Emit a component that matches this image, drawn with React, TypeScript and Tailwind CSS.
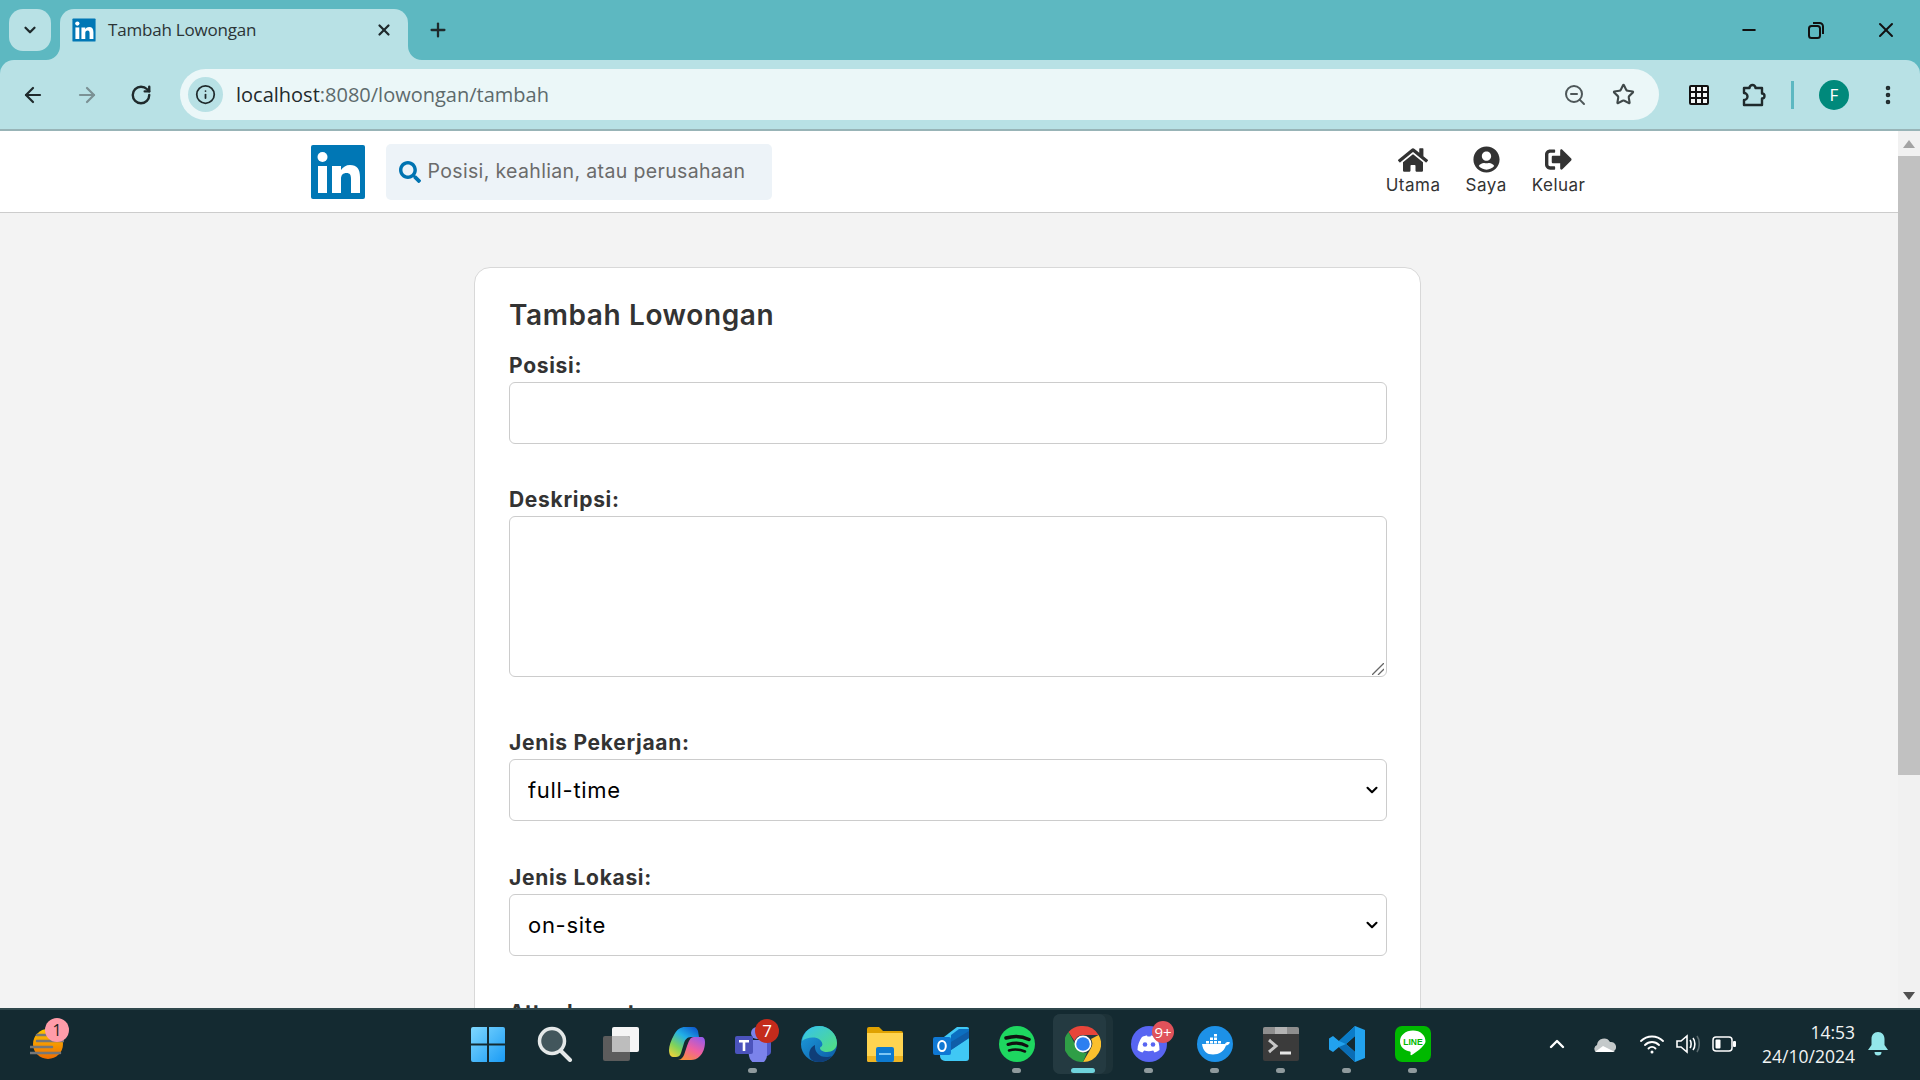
import { ArrowLeft, ArrowRight, ChevronDown, ChevronUp, EllipsisVertical, Info, Minus, Plus, RotateCw, Star, X, ZoomOut } from 'lucide-react';
import { FaHome, FaSearch, FaSignOutAlt, FaUserCircle } from 'react-icons/fa';

function LinkedinLogo({ size }: { size: number }) {
  return (
    <svg width={size} height={size} viewBox="0 0 56 56" className="shrink-0">
      <rect x="1" y="1" width="54" height="54" rx="2" fill="#0077b5" />
      <rect x="8" y="22" width="9" height="27" fill="#fff" />
      <circle cx="12.500" cy="13" r="5" fill="#fff" />
      <path d="M22 22h9v4c2-3 5-5 9-5 7 0 10 4 10 12v16h-9V35c0-4-1-6-4.500-6S31 31 31 35v14h-9Z" fill="#fff" />
    </svg>
  );
}

function Flare({ side }: { side: 'left' | 'right' }) {
  return (
    <svg width="14" height="14" viewBox="0 0 14 14" className={`absolute bottom-0 ${side === 'left' ? '-left-[14px]' : '-right-[14px]'}`}>
      {side === 'left' ? <path d="M14 0V14H0A14 14 0 0 0 14 0Z" fill="#b8e1e5" /> : <path d="M0 0V14H14A14 14 0 0 1 0 0Z" fill="#b8e1e5" />}
    </svg>
  );
}

function ChromeBar() {
  return (
    <div className="shrink-0 bg-[#5db8c1] text-[#1f2a2c]">
      {/* tab strip */}
      <div className="h-[60px] flex items-end pl-[9px]">
        <div className="self-start mt-[9px] w-[42px] h-[42px] rounded-[14px] bg-[#b8e1e5] flex items-center justify-center">
          <ChevronDown size={18} strokeWidth={3} />
        </div>
        <div className="relative ml-[9px] w-[348px] h-[51px] rounded-t-[14px] bg-[#b8e1e5] flex items-center pl-[12px] pb-[9px]">
          <Flare side="left" />
          <Flare side="right" />
          <LinkedinLogo size={24} />
          <span className="ml-[12px] text-[17px] font-['Open_Sans',sans-serif] tracking-[-0.2px] text-[#2b3436]">Tambah Lowongan</span>
          <X size={18} strokeWidth={3} className="ml-auto mr-[15px]" />
        </div>
        <Plus size={22} strokeWidth={2.5} className="self-start mt-[19px] ml-[19px]" />
        <div className="ml-auto self-start flex items-center h-[60px] text-[#111]">
          <Minus size={20} strokeWidth={2.4} className="mr-[48px]" />
          <svg width="18" height="18" viewBox="0 0 18 18" fill="none" stroke="#111" strokeWidth="2" className="mr-[49px]">
            <rect x="2" y="5" width="11" height="12" rx="2.5" />
            <path d="M6 2h6.500A3.500 3.500 0 0 1 16 5.500V13" />
          </svg>
          <X size={24} strokeWidth={2} className="mr-[22px]" />
        </div>
      </div>
      {/* toolbar */}
      <div className="h-[71px] bg-[#b8e1e5] rounded-t-[14px] border-b-2 border-[#98b4b7] flex items-center">
        <ArrowLeft size={24} strokeWidth={2.2} className="ml-[21px]" />
        <ArrowRight size={24} strokeWidth={2.2} className="ml-[30px] text-[#7b9194]" />
        <RotateCw size={22} strokeWidth={2.6} className="ml-[31px]" />
        <div className="ml-[28px] w-[1479px] h-[51px] rounded-full bg-[#ebf7f8] flex items-center pl-[8px] pr-[24px]">
          <div className="w-[35px] h-[35px] rounded-full bg-[#b8e1e5] flex items-center justify-center">
            <Info size={21} strokeWidth={2} />
          </div>
          <span className="ml-[13px] text-[20px] font-['Open_Sans',sans-serif] text-[#1f2a2c]">
            localhost<span className="text-[#5d6a6c]">:8080/lowongan/tambah</span>
          </span>
          <ZoomOut size={24} strokeWidth={2} className="ml-auto text-[#4e5759]" />
          <Star size={23} strokeWidth={2.2} className="ml-[25px] text-[#3f4849]" />
        </div>
        <svg width="22" height="22" viewBox="0 0 22 22" className="ml-[29px]" fill="none" stroke="#111" strokeWidth="2">
          <rect x="2" y="2" width="18" height="18" rx="1" fill="#f3f6f6" />
          <path d="M8 2v18M14 2v18M2 8h18M2 14h18" />
        </svg>
        <svg width="26" height="26" viewBox="0 0 26 26" className="ml-[31px]" fill="none" stroke="#1f2a2c" strokeWidth="2.4" strokeLinejoin="round">
          <path d="M3 6h5.500a3 3 0 0 1 6 0H21v5.500a2.500 2.500 0 0 1 0 5V23H3v-5a3.500 3.500 0 0 0 0-7Z" />
        </svg>
        <div className="ml-[24px] w-[3px] h-[28px] bg-[#5db8c1]" />
        <div className="ml-[25px] w-[30px] h-[30px] rounded-full bg-[#00897b] text-white text-[17px] font-['Open_Sans',sans-serif] flex items-center justify-center">F</div>
        <EllipsisVertical size={24} strokeWidth={2.6} className="ml-[27px]" />
      </div>
    </div>
  );
}

function NavItem({ icon, label }: { icon: React.ReactNode; label: string }) {
  return (
    <div className="flex flex-col items-center text-[#333]">
      <div className="h-[28px] flex items-center text-[27px]">{icon}</div>
      <span className="text-[17px] leading-[22px] tracking-[0.5px]">{label}</span>
    </div>
  );
}

function Header() {
  return (
    <div className="h-[82px] shrink-0 bg-white border-b border-[#ccc] pr-[3px]">
      <div className="w-[1276px] mx-auto h-full flex items-center">
        <LinkedinLogo size={56} />
        <div className="ml-[20px] w-[386px] h-[56px] rounded-[5px] bg-[#edf3f8] flex items-center pl-[13px]">
          <FaSearch className="text-[#0073b1] text-[22px] shrink-0" />
          <input
            readOnly
            placeholder="Posisi, keahlian, atau perusahaan"
            className="ml-[7px] w-[345px] bg-transparent outline-none text-[19.5px] tracking-[0.35px] placeholder:text-[#6b6b6b]"
          />
        </div>
        <div className="ml-auto flex items-start gap-[25px] -mt-[2px]">
          <NavItem icon={<FaHome className="text-[30px]" />} label="Utama" />
          <NavItem icon={<FaUserCircle />} label="Saya" />
          <NavItem icon={<FaSignOutAlt />} label="Keluar" />
        </div>
      </div>
    </div>
  );
}

function Field({ label, children, mb }: { label: string; children: React.ReactNode; mb: string }) {
  return (
    <div className={mb}>
      <label className="block text-[21px] leading-[29px] font-bold tracking-[0.7px] text-[#333] mb-[2px]">{label}</label>
      {children}
    </div>
  );
}

const inputCls = 'block w-full border-[1.5px] border-[#ccc] rounded-[6px] bg-white outline-none text-[22px] text-black tracking-[0.7px]';

function SelectField({ value }: { value: string }) {
  return (
    <div className="relative">
      <select className={`${inputCls} h-[62px] px-[18px] appearance-none`} defaultValue={value}>
        <option>{value}</option>
      </select>
      <ChevronDown size={18} strokeWidth={2.8} className="absolute right-[6px] top-[22px] text-black pointer-events-none" />
    </div>
  );
}

function FormCard() {
  return (
    <div className="w-[947px] mx-auto mt-[54px] bg-white border-[1.5px] border-[#d8d8d8] rounded-[16px] pl-[34px] pr-[33px] pt-[27px] h-[900px]">
      <h1 className="text-[28px] leading-[40px] font-semibold tracking-[0.6px] text-[#333] mb-[16px]">Tambah Lowongan</h1>
      <Field label="Posisi:" mb="mb-[41px]">
        <input readOnly className={`${inputCls} h-[62px] px-[18px]`} />
      </Field>
      <Field label="Deskripsi:" mb="mb-[51px]">
        <div className="relative">
          <textarea readOnly className={`${inputCls} h-[161px] px-[18px] py-[12px] resize-none`} />
          <svg width="12" height="12" viewBox="0 0 12 12" className="absolute right-[3px] bottom-[2px] pointer-events-none" stroke="#666" strokeWidth="1.300">
            <path d="M0 12 12 0M6 12l6-6" />
          </svg>
        </div>
      </Field>
      <Field label="Jenis Pekerjaan:" mb="mb-[42px]">
        <SelectField value="full-time" />
      </Field>
      <Field label="Jenis Lokasi:" mb="mb-[42px]">
        <SelectField value="on-site" />
      </Field>
      <Field label="Attachment:" mb="mb-0">
        <div />
      </Field>
    </div>
  );
}

function Scrollbar() {
  return (
    <div className="w-[22px] shrink-0 bg-[#f1f1f1] flex flex-col items-center">
      <div className="h-[25px] flex items-center justify-center">
        <svg width="12" height="8" viewBox="0 0 12 8"><path d="M6 0 12 8H0Z" fill="#a3a3a3" /></svg>
      </div>
      <div className="w-full h-[619px] bg-[#c1c1c1]" />
      <div className="mt-auto h-[25px] flex items-center justify-center">
        <svg width="12" height="8" viewBox="0 0 12 8"><path d="M6 8 12 0H0Z" fill="#505050" /></svg>
      </div>
    </div>
  );
}

/* taskbar icons, 36px */
const WindowsIcon = (
  <svg width="36" height="36" viewBox="0 0 36 36">
    <defs>
      <linearGradient id="win" x1="0" y1="0" x2="1" y2="1">
        <stop offset="0" stopColor="#7fd8ff" />
        <stop offset="1" stopColor="#1a9bf5" />
      </linearGradient>
    </defs>
    <path d="M0 3a2 2 0 0 1 2-2h14v16.500H0ZM18 1h14a2 2 0 0 1 2 2v14.500H18ZM0 19.500h16V36H2a2 2 0 0 1-2-2ZM18 19.500h16V34a2 2 0 0 1-2 2H18Z" fill="url(#win)" />
  </svg>
);

const SearchIcon = (
  <svg width="36" height="36" viewBox="0 0 36 36" fill="none">
    <circle cx="15" cy="15" r="12.500" fill="#42565c" stroke="#e4e8e8" strokeWidth="3.500" />
    <path d="M24 25l9 9" stroke="#e4e8e8" strokeWidth="4" strokeLinecap="round" />
  </svg>
);

const TaskViewIcon = (
  <svg width="36" height="36" viewBox="0 0 36 36">
    <rect x="9" y="1" width="27" height="25" rx="2" fill="#f5f5f5" />
    <rect x="0" y="10" width="27" height="25" rx="2" fill="#5c5c5c" />
    <path d="M9 10h16a2 2 0 0 1 2 2v14H9Z" fill="#bdbdbd" />
  </svg>
);

const CopilotIcon = (
  <svg width="36" height="36" viewBox="0 0 36 36">
    <defs>
      <linearGradient id="cp1" x1="0.800" y1="0" x2="0.100" y2="1">
        <stop offset="0" stopColor="#0f5fd0" />
        <stop offset="0.350" stopColor="#22b0e8" />
        <stop offset="0.700" stopColor="#7fd35a" />
        <stop offset="1" stopColor="#f3d23a" />
      </linearGradient>
      <linearGradient id="cp2" x1="0.800" y1="0" x2="0.200" y2="1">
        <stop offset="0" stopColor="#9a5be8" />
        <stop offset="0.500" stopColor="#f05fa0" />
        <stop offset="1" stopColor="#f8903a" />
      </linearGradient>
    </defs>
    <path d="M16 1H24C27 1 28 3 29 5L30 11H22C18 11 16 14 15 17L12 27C11 30 9 31 7 31H4C1 31 0 27 0 24 0 20 2 14 5 9 8 3 12 1 16 1Z" fill="url(#cp1)" />
    <path d="M25 11H32C35 11 36 13 36 16 36 22 34 27 31 30 28 33 25 34 22 34H9C12 34 14 31 15 29L18 20C20 15 21 11 25 11Z" fill="url(#cp2)" />
  </svg>
);

const TeamsIcon = (
  <svg width="36" height="36" viewBox="0 0 36 36">
    <circle cx="22" cy="7" r="6" fill="#7b83eb" />
    <circle cx="32" cy="10" r="4" fill="#5059c9" />
    <path d="M26 15h10v11a5 5 0 0 1-8 3Z" fill="#5059c9" />
    <path d="M12 14h20v14a9 9 0 0 1-18 2Z" fill="#7b83eb" />
    <rect x="0" y="10" width="18" height="18" rx="2" fill="#4b53bc" />
    <path d="M4 14h10v2.500h-3.700V25H7.700v-8.500H4Z" fill="#fff" />
  </svg>
);

const EdgeIcon = (
  <svg width="36" height="36" viewBox="0 0 36 36">
    <defs>
      <linearGradient id="eg1" x1="0" y1="0" x2="1" y2="1">
        <stop offset="0" stopColor="#35c1f1" />
        <stop offset="1" stopColor="#54e07a" />
      </linearGradient>
      <linearGradient id="eg2" x1="0" y1="0" x2="1" y2="1">
        <stop offset="0" stopColor="#1ea0e0" />
        <stop offset="1" stopColor="#0c59a4" />
      </linearGradient>
    </defs>
    <circle cx="18" cy="18" r="18" fill="url(#eg2)" />
    <path d="M1 15C3 5 10 0 18 0c10 0 18 8 18 17 0 6-5 9-10 9-4 0-7-2-7-4 0-1 1-1 2-2 1-2 0-5-3-7-6-3-13-1-17 2Z" fill="url(#eg1)" />
    <path d="M14 19c-1 7 5 13 13 12 2 0 3-1 4-1-3 4-8 6-13 6-4 0-7-1-9-4-2-5 0-11 5-13Z" fill="#0f3e78" />
  </svg>
);

const FilesIcon = (
  <svg width="36" height="36" viewBox="0 0 36 36">
    <path d="M0 3a2 2 0 0 1 2-2h10l4 4h18a2 2 0 0 1 2 2v6H0Z" fill="#e0a100" />
    <path d="M0 7h36v27a2 2 0 0 1-2 2H2a2 2 0 0 1-2-2Z" fill="#ffd451" />
    <path d="M0 30h36v4a2 2 0 0 1-2 2H2a2 2 0 0 1-2-2Z" fill="#eeb422" />
    <rect x="9" y="21" width="18" height="15" rx="2" fill="#0d7ad0" />
    <rect x="12" y="27" width="12" height="2" fill="#7cc6f5" />
  </svg>
);

const OutlookIcon = (
  <svg width="36" height="36" viewBox="0 0 36 36">
    <path d="M7 14 24 1h10a2 2 0 0 1 2 2v29a3 3 0 0 1-3 3H12a5 5 0 0 1-5-5Z" fill="#40c8f5" />
    <path d="M18 9 26 3l10 0v9l-18 12Z" fill="#0c6fc0" />
    <path d="M18 16 36 5v7L18 24Z" fill="#0f5da8" />
    <rect x="0" y="11" width="18" height="18" rx="2" fill="#0f78d4" />
    <ellipse cx="9" cy="20" rx="3.800" ry="5" fill="none" stroke="#fff" strokeWidth="2" />
  </svg>
);

const SpotifyIcon = (
  <svg width="36" height="36" viewBox="0 0 36 36" fill="none">
    <circle cx="18" cy="18" r="18" fill="#1ed760" />
    <path d="M7 12c8-2.500 16-2 23 1.500" stroke="#111" strokeWidth="3.500" strokeLinecap="round" />
    <path d="M9 18.500c6.500-2 14-1.500 19 1.500" stroke="#111" strokeWidth="3" strokeLinecap="round" />
    <path d="M10 24.500c5.500-1.500 11-1 16 1" stroke="#111" strokeWidth="2.500" strokeLinecap="round" />
  </svg>
);

const ChromeIcon = (
  <svg width="36" height="36" viewBox="0 0 36 36">
    <path d="M18 0a18 18 0 0 1 15.600 9H18a9 9 0 0 0-8.500 6L3.500 6A18 18 0 0 1 18 0Z" fill="#e8453a" />
    <path d="M33.600 9A18 18 0 0 1 18 36l7.800-13.500A9 9 0 0 0 26 13Z" fill="#fbc02d" />
    <path d="M3.500 6 11 20a9 9 0 0 0 11 6.500L18 36A18 18 0 0 1 3.500 6Z" fill="#2f9e46" />
    <circle cx="18" cy="18" r="8.500" fill="#fff" />
    <circle cx="18" cy="18" r="6.800" fill="#2d7ff0" />
  </svg>
);

const DiscordIcon = (
  <svg width="36" height="36" viewBox="0 0 36 36">
    <circle cx="18" cy="18" r="18" fill="#5865f2" />
    <path d="M11 11c2-1 4-1.500 5-1.500l.500 1h3l.500-1c1 0 3 .500 5 1.500 2.500 3.500 3.500 8 3.500 13-1.500 1-3 2-5 2.500l-1.300-2c-3 1-6 1-9 0L11.500 26.500c-2-.500-3.500-1.500-5-2.500 0-5 2-9.500 4.500-13Z" fill="#fff" />
    <circle cx="14" cy="18.500" r="2.300" fill="#5865f2" />
    <circle cx="22" cy="18.500" r="2.300" fill="#5865f2" />
  </svg>
);

const DockerIcon = (
  <svg width="36" height="36" viewBox="0 0 36 36">
    <circle cx="18" cy="18" r="18" fill="#1d91e8" />
    <path d="M5 18h23c1-2 3-2.500 5-1.500-1 2-2.500 3-4 3-2 6-7 9-13 9-6 0-10-3-11-10.500Z" fill="#fff" />
    <path d="M9 15h3v2.500H9ZM13 15h3v2.500h-3ZM17 15h3v2.500h-3ZM21 15h3v2.500h-3ZM13 11.500h3V14h-3ZM17 11.500h3V14h-3ZM17 8h3v2.500h-3Z" fill="#fff" />
  </svg>
);

const TerminalIcon = (
  <svg width="36" height="36" viewBox="0 0 36 36" fill="none">
    <rect x="0" y="1" width="36" height="34" rx="2" fill="#3b3b3b" />
    <path d="M0 3a2 2 0 0 1 2-2h32a2 2 0 0 1 2 2v5H0Z" fill="#8e8e8e" />
    <path d="M12 1h12v7H12Z" fill="#b3b3b3" />
    <path d="M6 14l7 6-7 6" stroke="#c8c8c8" strokeWidth="3" />
    <path d="M17 27h11" stroke="#e6e6e6" strokeWidth="3" />
  </svg>
);

const VsCodeIcon = (
  <svg width="36" height="36" viewBox="0 0 36 36">
    <path d="M26 0 36 4v28l-10 4L10 21l-6 5-4-2.500V12.500L4 10l6 5Zm0 10-9 8 9 8Z" fill="#22a2ee" fillRule="evenodd" />
    <path d="M26 0v10l-9 8-7-3L26 0Z" fill="#0a7cc8" />
    <path d="M26 36V26l-9-8-7 3 16 15Z" fill="#0a6db5" />
  </svg>
);

const LineIcon = (
  <svg width="36" height="36" viewBox="0 0 36 36">
    <rect width="36" height="36" rx="7" fill="#00b900" />
    <path d="M18 4.500c-7.500 0-13 4.700-13 11 0 5 4 9.200 10 10 1 .300.500 2 .500 3 0 1 1 .700 2 0 3-2 8-5.300 10-8 1.500-1.600 3-3.200 3-5 0-6.300-5-11-12.500-11Z" fill="#fff" />
    <text x="18" y="18.500" textAnchor="middle" fontSize="8.500" fontWeight="700" fill="#00b900" fontFamily="Liberation Sans, sans-serif">LINE</text>
  </svg>
);

function TaskIcon({ icon, dot, badge, badgeCls }: { icon: React.ReactNode; dot?: boolean; badge?: string; badgeCls?: string }) {
  return (
    <div className="relative w-[36px] h-[36px] shrink-0">
      {icon}
      {dot && <span className="absolute left-[13px] top-[42px] w-[9px] h-[5px] rounded-full bg-[#8f9a9d]" />}
      {badge && <span className={`absolute rounded-full flex items-center justify-center text-white ${badgeCls}`}>{badge}</span>}
    </div>
  );
}

function Taskbar() {
  return (
    <div className="h-[72px] shrink-0 bg-[#142a31] border-t-2 border-[#2f474c] flex items-center pb-[2px] font-['Open_Sans',sans-serif] text-white">
      <div className="w-[471px] shrink-0 pl-[30px]">
        <div className="relative w-[34px] h-[30px]">
          <svg width="34" height="30" viewBox="0 0 34 30">
            <defs>
              <linearGradient id="sun" x1="0" y1="0" x2="0" y2="1">
                <stop offset="0" stopColor="#fdc400" />
                <stop offset="1" stopColor="#ef6c00" />
              </linearGradient>
            </defs>
            <circle cx="18" cy="15" r="15" fill="url(#sun)" />
            <path d="M7 6h15M7 12h28M0 18h22M0 24h30" stroke="#777" strokeWidth="2.500" strokeLinecap="round" />
          </svg>
          <span className="absolute left-[15px] -top-[11px] w-[24px] h-[24px] rounded-full bg-[#ff9ca9] text-[#222] text-[16px] flex items-center justify-center">1</span>
        </div>
      </div>
      <div className="flex items-center gap-[30px]">
        <TaskIcon icon={WindowsIcon} />
        <TaskIcon icon={SearchIcon} />
        <TaskIcon icon={TaskViewIcon} />
        <TaskIcon icon={CopilotIcon} />
        <TaskIcon icon={TeamsIcon} dot badge="7" badgeCls="-right-[8px] -top-[7px] w-[24px] h-[24px] bg-[#c42b1c] text-[17px]" />
        <TaskIcon icon={EdgeIcon} />
        <TaskIcon icon={FilesIcon} />
        <TaskIcon icon={OutlookIcon} />
        <TaskIcon icon={SpotifyIcon} dot />
        <div className="relative w-[36px] h-[36px] shrink-0">
          <span className="absolute -left-[12px] -top-[12px] w-[60px] h-[60px] rounded-[7px] bg-[#1d3238]" />
          <span className="absolute -left-[12px] -top-[12px] w-[53px] h-[60px] rounded-[7px] bg-[#243a41]" />
          <span className="absolute left-[6px] top-[42px] w-[24px] h-[5px] rounded-full bg-[#6fd3dc]" />
          <div className="relative">{ChromeIcon}</div>
        </div>
        <TaskIcon icon={DiscordIcon} dot badge="9+" badgeCls="-right-[7px] -top-[5px] w-[22px] h-[22px] bg-[#e0525a] text-[15px]" />
        <TaskIcon icon={DockerIcon} dot />
        <TaskIcon icon={TerminalIcon} dot />
        <TaskIcon icon={VsCodeIcon} dot />
        <TaskIcon icon={LineIcon} dot />
      </div>
      {/* tray */}
      <div className="flex-1 flex items-center pl-[114px]">
        <ChevronUp size={24} strokeWidth={2.4} />
        <svg width="24" height="16" viewBox="0 0 24 16" className="ml-[23px]">
          <path d="M5 9a7 7 0 0 1 13-3 5 5 0 0 1 2 10H4a4 4 0 0 1 1-7Z" fill="#c4c9ca" />
          <path d="M3 16l8-6 6 3 6 3Z" fill="#fff" />
        </svg>
        <svg width="24" height="20" viewBox="0 0 24 20" fill="none" stroke="#fff" strokeWidth="1.800" strokeLinecap="round" className="ml-[24px]">
          <path d="M1 7c6-6 16-6 22 0M5 11c4-4 10-4 14 0M8.500 14.500c2-2 5-2 7 0" />
          <circle cx="12" cy="18" r="1.500" fill="#fff" stroke="none" />
        </svg>
        <svg width="24" height="22" viewBox="0 0 24 22" fill="none" stroke="#fff" strokeWidth="1.600" className="ml-[12px]">
          <path d="M1 8v6h4l6 5V3L5 8Z" />
          <path d="M14 7c1.500 2 1.500 6 0 8M17 5c2.500 3 2.500 9 0 12" />
          <path d="M21 3c3 4 3 12 0 16" stroke="#5a6a6e" />
        </svg>
        <svg width="24" height="16" viewBox="0 0 24 16" fill="none" className="ml-[12px]">
          <rect x="1" y="1" width="19" height="14" rx="3" stroke="#fff" strokeWidth="1.500" />
          <rect x="3.500" y="3.500" width="5" height="9" rx="1" fill="#fff" />
          <rect x="21" y="5" width="3" height="6" rx="1" fill="#fff" />
        </svg>
        <div className="ml-auto flex flex-col items-end text-[17.500px] leading-[24px] text-[#f2f4f4]">
          <span>14:53</span>
          <span>24/10/2024</span>
        </div>
        <svg width="20" height="24" viewBox="0 0 20 24" className="ml-[13px] mr-[32px]" fill="#93e6ea">
          <path d="M10 0c4 0 6.500 3 6.500 7v6l3.500 5H0l3.500-5V7C3.500 3 6 0 10 0Z" />
          <path d="M6.500 20h7a3.500 3.500 0 0 1-7 0Z" />
        </svg>
      </div>
    </div>
  );
}

export default function App() {
  return (
    <div className="w-[1920px] h-[1080px] overflow-hidden flex flex-col bg-[#f3f3f3] font-['Inter',sans-serif]">
      <ChromeBar />
      <div className="flex-1 min-h-0 flex">
        <div className="flex-1 min-w-0 overflow-hidden">
          <Header />
          <div className="pr-[3px]">
            <FormCard />
          </div>
        </div>
        <Scrollbar />
      </div>
      <Taskbar />
    </div>
  );
}
